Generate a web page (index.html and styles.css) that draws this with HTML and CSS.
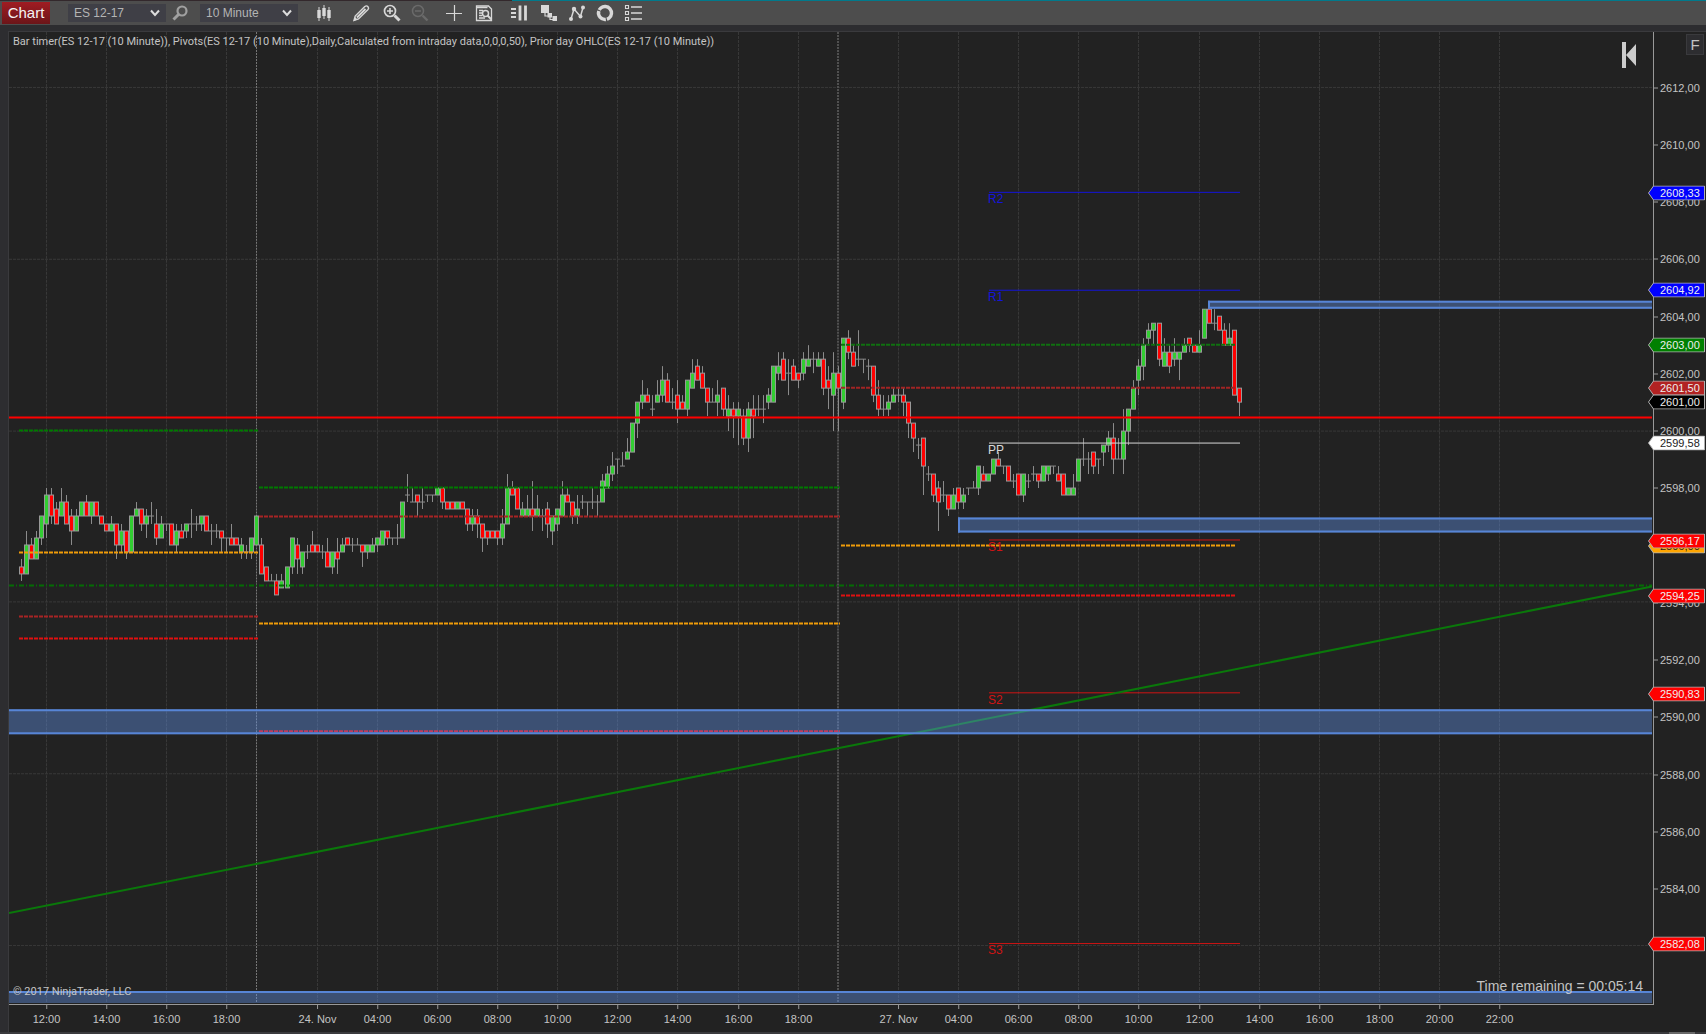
FILE: index.html
```html
<!DOCTYPE html>
<html lang="en">
<head>
<meta charset="utf-8">
<title>Chart - ES 12-17</title>
<link rel="stylesheet" href="styles.css">
</head>
<body>
<header class="toolbar">
  <button class="chart-tab" type="button">Chart</button>
  <div class="picker">
    <select class="picker-select" aria-label="Instrument"><option>ES 12-17</option></select>
    <svg class="picker-arrow" viewBox="0 0 10 8"><path d="M1 1.5 5 6 9 1.5"/></svg>
  </div>
  <button class="tool find" type="button" aria-label="Search instrument">
    <svg class="icon dim" viewBox="0 0 18 18"><circle cx="11" cy="7" r="4.5" stroke-width="2.2"/><path d="M7.500 10.500 2.500 15.500" stroke-width="3"/></svg>
  </button>
  <div class="picker">
    <select class="picker-select" aria-label="Interval"><option>10 Minute</option></select>
    <svg class="picker-arrow" viewBox="0 0 10 8"><path d="M1 1.500 5 6 9 1.500"/></svg>
  </div>
  <div class="tools">
    <button class="tool" type="button" aria-label="Chart style"><svg class="icon" viewBox="0 0 18 18"><path d="M4 3v14M9 1v14M14 3v14" stroke-width="1"/><path d="M4 6v8M9 4v8M14 6v8" stroke-width="3.400"/></svg></button>
    <button class="tool group" type="button" aria-label="Drawing tools"><svg class="icon" viewBox="-1 0 18 18"><path d="M2 16.500 3.200 12 12.800 2.500q1.800-1.300 3.200.2 1.200 1.500 0 2.800L6.500 15z" stroke-width="1.400"/><path d="M5 13.500 13.500 5" stroke-width="2"/><path d="M1.500 17 3 13l2.500 2.500z" fill="#d8d8d8" stroke="none"/></svg></button>
    <button class="tool" type="button" aria-label="Zoom in"><svg class="icon" viewBox="-3 0 18 18"><circle cx="7" cy="7" r="5.500" stroke-width="1.700"/><path d="M4 7h6M7 4v6" stroke-width="1.600"/><path d="m11.500 11.500 5 5" stroke-width="3"/></svg></button>
    <button class="tool" type="button" aria-label="Zoom out" disabled><svg class="icon faded" viewBox="-2 0 18 18"><circle cx="7" cy="7" r="5.500" stroke-width="1.500"/><path d="M4 7h6" stroke-width="1.500"/><path d="m11.500 11.500 5 5" stroke-width="2.400"/></svg></button>
    <button class="tool group" type="button" aria-label="Crosshair"><svg class="icon" viewBox="0 0 18 18"><path d="M1 9.500h16M9.500 1v16" stroke-width="1.200"/></svg></button>
    <button class="tool" type="button" aria-label="Data box"><svg class="icon" viewBox="-1 0 18 18"><path d="M1.500 2h12l3 3v11.500h-15z" stroke-width="1.300"/><path d="M1.500 3.500h11M4 6.500h4M4 9h3M4 11.500h3M4 14h6" stroke-width="1.400"/><circle cx="10.500" cy="9.500" r="3" stroke-width="1.500"/><path d="m12.500 11.500 4 4" stroke-width="1.900"/></svg></button>
    <button class="tool group" type="button" aria-label="Chart trader"><svg class="icon" viewBox="0 0 18 18"><path d="M1 5h5M1 9h5M1 13h5" stroke-width="1.800"/><path d="M10 1.500v15M15.500 1.500v15" stroke-width="2.800"/></svg></button>
    <button class="tool" type="button" aria-label="Data series"><svg class="icon" viewBox="-1 0 18 18"><path d="M1 1h8v8H1zM7.500 9H12v4.500H7.500zM12.500 12H17v5h-4.500z" fill="#d8d8d8" stroke="none"/><path d="M5 9v3h3m2 1v2.500h3" stroke-width="1.200"/></svg></button>
    <button class="tool" type="button" aria-label="Indicators"><svg class="icon" viewBox="0 0 18 18"><path d="M3 15 6 5l6.500 7.500L15 3.500" stroke-width="1.500"/><g fill="#d8d8d8" stroke="none"><circle cx="3" cy="15" r="2"/><circle cx="6" cy="5" r="2.200"/><circle cx="12.500" cy="12.500" r="2"/><circle cx="15" cy="3.500" r="2"/></g></svg></button>
    <button class="tool" type="button" aria-label="Strategies"><svg class="icon" viewBox="1 0 18 18"><circle cx="9" cy="9" r="6.500" stroke-width="3.400" stroke-dasharray="12.610 1" transform="rotate(-40 9 9)"/></svg></button>
    <button class="tool" type="button" aria-label="Properties"><svg class="icon" viewBox="2 0 18 18"><path d="M1.500 1.500h3v3h-3zM1.500 7.500h3v3h-3zM1.500 13.500h3v3h-3z" stroke-width="1.100"/><path d="M7 3h11M7 9h11M7 15h11" stroke-width="1.500"/></svg></button>
  </div>
</header>

<main class="chart">
  <section class="plot" id="plot">
    <svg class="canvas" id="canvas" viewBox="9 32 1644 973" preserveAspectRatio="none"></svg>
    <p class="caption">Bar timer(ES 12-17 (10 Minute)), Pivots(ES 12-17 (10 Minute),Daily,Calculated from intraday data,0,0,0,50), Prior day OHLC(ES 12-17 (10 Minute))</p>
    <button class="jump" type="button" aria-label="Return to latest bar"><svg viewBox="0 0 16 26"><path d="M1 0h4v26H1zM15 2v22L5 13z" fill="#ccc"/></svg></button>
    <p class="copyright">© 2017 NinjaTrader, LLC</p>
    <p class="timer">Time remaining = 00:05:14</p>
  </section>
  <aside class="prices" id="prices"><button class="fixed-scale" type="button">F</button></aside>
  <footer class="times" id="times"></footer>
</main>
<div class="scroll"><span class="scroll-thumb"></span></div>
<script src="chart.js"></script>
</body>
</html>
```
FILE: styles.css
```css
* { box-sizing: border-box; }
body {
  margin: 0;
  height: 100vh;
  display: flex;
  flex-direction: column;
  background: #2d2d30;
  color: #c4c4c4;
  font-family: "Liberation Sans", Arial, sans-serif;
  font-size: 11px;
  overflow: hidden;
}
p { margin: 0; }
button { border: 0; padding: 0; background: none; color: inherit; font-family: inherit; }

.toolbar {
  flex: none;
  height: 25px;
  display: flex;
  align-items: center;
  padding-left: 2px;
  background: linear-gradient(90deg, #33282c 30%, #007a8c 30%) top / 100% 1px no-repeat, #4d4d4d;
}
.chart-tab {
  width: 48px;
  height: 22px;
  margin-right: 18px;
  background: linear-gradient(#a01c22, #6c1519);
  color: #f4f4f4;
  font-size: 15px;
}
.picker { position: relative; width: 98px; height: 18px; }
.picker-select {
  width: 100%;
  height: 100%;
  padding: 0 6px;
  border: 0;
  appearance: none;
  background: #3f3f46;
  color: #b4b4b4;
  font-family: inherit;
  font-size: 12px;
}
.picker-arrow {
  position: absolute;
  right: 6px;
  top: 5px;
  width: 10px;
  height: 8px;
  fill: none;
  stroke: #ddd;
  stroke-width: 2;
  pointer-events: none;
}
.tool { width: 29px; height: 22px; display: flex; align-items: center; justify-content: center; }
.find { width: 34px; padding-right: 6px; }
.group { margin-left: 7px; }
.icon { width: 18px; height: 18px; fill: none; stroke: #d8d8d8; overflow: visible; }
.dim { stroke: #a0a0a0; }
.faded { stroke: #6a6a6a; }
.tools { display: flex; margin-left: 11px; }

.chart {
  flex: 1;
  min-height: 0;
  display: grid;
  grid-template-columns: 1fr 53px;
  grid-template-rows: 1fr 27px;
  margin: 6px 0 0 8px;
  border-top: 1px solid #3a3a3d;
  border-left: 1px solid #3a3a3d;
  background: #222;
}
.plot { position: relative; min-height: 0; border-bottom: 1px solid #999; }
.canvas { position: absolute; inset: 0; width: 100%; height: 100%; }
.caption, .copyright { position: absolute; left: 4px; font-family: Roboto, sans-serif; line-height: 14px; }
.caption { top: 3px; }
.copyright { bottom: 5px; }
.timer { position: absolute; right: 10px; bottom: 9px; font-size: 14px; line-height: 18px; }
.jump { position: absolute; right: 16px; top: 10px; width: 16px; height: 26px; }
.pivot { position: absolute; font-size: 12px; line-height: 14px; }

.prices { position: relative; border-left: 1px solid #999; }
.price, .tag { position: absolute; line-height: 15px; height: 15px; transform: translateY(-50%); }
.price { left: 0; padding-left: 6px; }
.price::before { content: ""; position: absolute; left: 0; top: 7px; width: 4px; height: 1px; background: #999; }
.tag { left: -6px; right: 1px; padding-left: 12px; color: #eee; }
.tag-shape { position: absolute; inset: 0; width: 100%; height: 100%; stroke: #b0b0b0; }
.tag-text { position: relative; }
.tag.dark-text { color: #222; }
.fixed-scale {
  position: absolute;
  right: 2px;
  top: 2px;
  width: 18px;
  height: 21px;
  border: 1px solid #3a3a3d;
  background: #2d2d30;
  font-size: 15px;
}
.times { position: relative; grid-column: 1 / -1; margin-right: 53px; }
.time { position: absolute; top: 0; padding-top: 7px; line-height: 14px; white-space: nowrap; transform: translateX(-50%); }
.time::before { content: ""; position: absolute; left: 50%; top: 0; width: 1px; height: 4px; background: #999; }
.scroll { flex: none; height: 2px; background: #3a3a3d; }
.scroll-thumb { display: block; width: 26px; height: 2px; margin: 0 11px 0 auto; background: #686868; }
```
FILE: chart.js
```js
// Bars as open, high, low, close, in ticks of 0.25 above 2594.
const BARS = `5,6,3,4 4,10,4,8 8,9,6,6 6,10,6,9 9,12,8,12 11,16,9,15 15,16,11,12 13,14,11,11 12,16,12,14 14,15,11,11
12,13,8,10 10,13,10,12 12,14,12,14 14,15,12,12 12,14,11,14 14,14,12,12 12,12,11,11 11,11,10,10 10,12,10,11 11,11,6,8
8,11,7,10 10,10,6,7 7,12,7,12 12,14,12,13 13,13,10,11 11,13,9,12 12,14,11,12 11,13,8,9 9,12,9,11 11,11,10,11
11,11,8,8 8,11,7,10 10,11,9,9 10,11,9,11 11,13,9,11 11,12,10,11 11,12,10,12 12,12,10,10 10,11,8,10 10,11,9,10
10,10,7,9 9,9,7,9 9,11,8,8 9,9,8,8 7,9,6,8 7,8,6,7 7,9,6,9 8,12,8,12 8,9,4,4 5,5,3,3
3,4,3,3 3,4,1,1 2,4,2,3 2,5,2,5 5,9,4,9 8,9,4,6 5,7,4,7 7,8,6,7 8,10,7,7 8,8,7,7
7,8,6,7 7,9,5,5 5,7,4,7 7,9,4,6 7,9,7,8 9,9,8,8 8,9,7,8 8,9,8,8 8,8,5,7 7,8,6,8
7,9,7,8 8,9,7,9 8,10,8,10 10,10,8,9 9,9,8,9 9,11,8,9 9,14,9,14 15,18,14,15 14,16,14,14 15,15,12,14
14,16,13,14 15,15,14,15 15,15,14,15 15,16,15,16 16,16,13,14 14,14,13,13 14,14,13,13 13,14,13,14 14,14,13,13 13,13,10,11
11,13,10,12 12,13,9,11 11,11,7,9 10,10,8,9 10,10,9,9 10,10,8,9 9,13,8,11 11,18,11,16 16,17,15,15 16,16,13,13
12,14,12,13 12,15,12,13 13,17,10,12 12,15,12,13 12,13,10,12 13,14,9,11 10,12,8,12 11,13,10,13 12,17,12,15 15,16,14,14
14,14,11,12 12,15,11,13 14,15,13,14 14,14,12,14 14,16,13,14 14,15,12,14 14,18,14,17 16,19,16,18 18,21,17,19 20,20,18,20
19,21,19,19 20,23,20,21 21,25,21,25 25,28,23,28 28,31,27,29 29,30,28,28 27,29,26,27 28,31,28,29 29,33,28,31 31,32,28,28
28,30,27,28 29,31,25,27 28,29,27,27 27,31,26,31 30,34,30,32 33,34,31,31 32,33,30,30 30,30,26,28 28,30,28,28 28,31,26,29
30,30,26,27 26,29,24,27 27,28,23,26 26,28,22,27 26,27,22,23 23,28,21,27 27,29,23,26 27,29,26,27 27,29,25,27 28,30,27,29
28,33,28,33 32,35,31,33 34,35,31,31 32,34,29,32 33,34,31,31 32,32,30,31 32,35,31,34 33,36,33,34 34,35,32,34 33,35,33,34
34,35,29,30 31,33,27,30 29,35,24,32 32,33,24,30 28,37,27,37 37,38,34,35 35,36,33,33 34,38,33,34 34,34,32,34 33,34,31,33
33,33,28,29 29,31,26,27 27,29,26,27 27,29,26,28 28,30,28,29 29,30,28,29 29,30,26,28 28,28,23,25 25,25,21,23 22,23,20,22
23,23,15,19 18,19,17,18 18,18,14,15 16,17,10,14 15,17,14,15 15,15,12,13 13,16,13,15 16,16,13,14 14,16,13,15 16,16,15,16
16,17,16,16 16,19,15,19 18,19,17,17 17,18,17,18 18,20,18,20 20,21,19,19 19,19,18,19 19,19,17,17 17,18,16,17 18,18,15,15
15,18,14,18 17,18,16,17 18,19,17,18 18,18,16,17 17,19,17,19 18,19,17,19 19,19,18,19 18,19,17,17 18,18,15,15 15,16,15,16
15,18,15,16 17,20,17,20 20,23,19,20 20,21,18,20 21,21,18,19 20,20,18,20 21,22,19,22 22,24,21,23 23,25,18,20 20,23,20,20
20,27,18,24 24,27,22,27 27,31,27,30 31,34,29,33 33,37,31,36 37,39,36,38 38,39,36,39 39,39,33,34 33,37,33,35 35,36,32,33
34,37,33,35 34,35,31,35 35,37,35,36 37,37,35,36 36,36,35,35 35,38,35,36 37,41,37,41 41,41,39,39 39,41,38,39 40,40,38,38
38,39,36,36 36,39,36,37 38,38,29,29 30,30,26,28`.split(/\s+/).map(b => b.split(',').map(Number));

const LEFT = 9, TOP = 32, WIDTH = 1644, HEIGHT = 973, EDGE = 1652;
const barX = i => Math.floor(21.4 + i * 5.0115) + 0.5;
const priceY = p => 87.5 + (2612 - p) * 28.63;
const snap = y => Math.floor(y) + 0.5;
const pctX = x => (x - LEFT) / WIDTH * 100 + '%';
const pctY = y => (y - TOP) / HEIGHT * 100 + '%';

const line = (x1, y1, x2, y2, color, width = 1, dash = '') =>
  `<line x1="${x1}" y1="${y1}" x2="${x2}" y2="${y2}" stroke="${color}" stroke-width="${width}" stroke-dasharray="${dash}"/>`;
const level = (x1, x2, price, color, width) => {
  const y = width === 2 ? Math.round(priceY(price)) : snap(priceY(price));
  return line(x1, y, x2, y, color, width, '4 1');
};

const times = [[5, '12:00'], [17, '14:00'], [29, '16:00'], [41, '18:00'], [59, '24. Nov'], [71, '04:00'], [83, '06:00'],
  [95, '08:00'], [107, '10:00'], [119, '12:00'], [131, '14:00'], [143, '16:00'], [155, '18:00'], [175, '27. Nov'],
  [187, '04:00'], [199, '06:00'], [211, '08:00'], [223, '10:00'], [235, '12:00'], [247, '14:00'], [259, '16:00'],
  [271, '18:00'], [283, '20:00'], [295, '22:00']];

let art = '';
for (const [i] of times) art += line(barX(i), TOP, barX(i), 1004, '#383838', 1, '3 1');
for (let p = 2582; p <= 2612; p += 6) art += line(LEFT, snap(priceY(p)), EDGE, snap(priceY(p)), '#383838', 1, '3 1');
art += line(256.5, TOP, 256.5, 1004, '#777', 1, '2 1') + line(838, TOP, 838, 1004, '#505050', 2, '2 1');

BARS.forEach(([o, h, l, c], i) => {
  const x = barX(i), y = t => snap(priceY(2594 + t / 4));
  art += line(x, y(h), x, y(l), '#8c8c8c');
  art += o === c
    ? line(x - 2.5, y(o), x + 2.5, y(o), '#8c8c8c')
    : `<rect x="${x - 2}" y="${y(Math.max(o, c))}" width="4" height="${y(Math.min(o, c)) - y(Math.max(o, c))}" fill="${c > o ? '#32cd32' : '#f00'}" stroke="#999"/>`;
});

// Prior day open, high, low and close for each session
art += level(19, 258, 2600, '#007a00', 2) + level(19, 258, 2595.75, '#f09c08', 2) + level(19, 258, 2593.5, '#a82424', 2) + level(19, 258, 2592.75, '#e01010', 2);
art += level(259, 840, 2598, '#007a00', 2) + level(259, 840, 2597, '#a82424', 2) + level(259, 840, 2593.25, '#f09c08', 2) + level(259, 840, 2589.5, '#f00', 2);
art += level(841, 1236, 2603, '#107010', 2) + level(841, 1236, 2601.5, '#a02424', 2) + level(841, 1236, 2596, '#f09c08', 2) + level(841, 1236, 2594.25, '#e01010', 2);

const pivots = [[2608.33, 'R2', '#1414dc'], [2604.92, 'R1', '#1414dc'], [2599.58, 'PP', '#d8d8d8'],
  [2596.17, 'S1', '#d01414'], [2590.83, 'S2', '#d01414'], [2582.08, 'S3', '#d01414']];
for (const [p, , color] of pivots) art += line(989, snap(priceY(p)), 1240, snap(priceY(p)), color);

art += line(LEFT, 418, EDGE, 418, '#f00', 2);
art += line(LEFT, 586, EDGE, 586, '#046c04', 2, '5 2 1 2');
art += line(LEFT, 914, EDGE, 587, '#0a780a', 2);

for (const [x, y1, y2] of [[1208, 301, 309], [958, 518, 533], [LEFT, 710, 735], [LEFT, 992, 1004]]) {
  art += `<rect x="${x}" y="${y1}" width="${EDGE - x}" height="${y2 - y1}" fill="#6495ed" fill-opacity=".4"/>`;
  art += line(x, y1 + 1, EDGE, y1 + 1, '#5785d6', 2);
  if (y2 < 1004) art += line(x, y2 - 1, EDGE, y2 - 1, '#5785d6', 2);
  if (x > LEFT) art += line(x + 1, y1, x + 1, y2, '#5785d6', 2);
}
document.getElementById('canvas').innerHTML = art;

document.getElementById('plot').insertAdjacentHTML('beforeend', pivots.map(([p, name, color]) =>
  `<span class="pivot" style="left:${pctX(988)};top:${pctY(priceY(p))};color:${color}">${name}</span>`).join(''));

const number = p => p.toFixed(2).replace('.', ',');
let axis = '';
for (let p = 2584; p <= 2612; p += 2) axis += `<span class="price" style="top:${pctY(priceY(p))}">${number(p)}</span>`;
const tags = [[2608.33, '#00f'], [2604.92, '#00f'], [2603, '#008000'], [2601.5, '#b22222'], [2601, '#000'], [2599.58, '#fff'],
  [2596, '#ffa500'], [2596.17, '#f00'], [2594.25, '#f00'], [2590.83, '#f00'], [2582.08, '#f00']];
for (const [p, color] of tags) {
  const dark = color === '#fff' || color === '#ffa500' ? ' dark-text' : '';
  axis += `<span class="tag${dark}" style="top:${pctY(priceY(p))}"><svg class="tag-shape" viewBox="0 0 57 15" preserveAspectRatio="none"><path d="M.5 7.5 5.500.5h51v14h-51z" fill="${color}"/></svg><span class="tag-text">${number(p)}</span></span>`;
}
document.getElementById('prices').insertAdjacentHTML('beforeend', axis);
document.getElementById('times').innerHTML = times.map(([i, t]) => `<span class="time" style="left:${pctX(barX(i))}">${t}</span>`).join('');
```
